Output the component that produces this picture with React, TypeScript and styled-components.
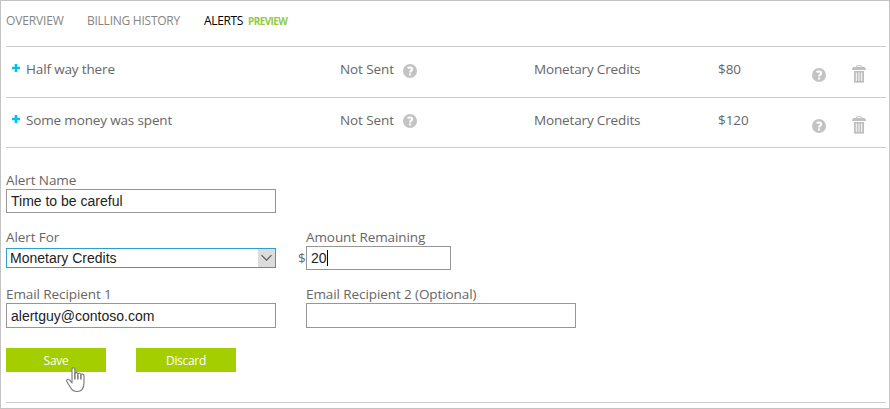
import React from "react";
import styled, { createGlobalStyle } from "styled-components";

const GlobalStyle = createGlobalStyle`
  * { box-sizing: border-box; }
  body { margin: 0; background: #fff; }
`;

const Panel = styled.main`
  position: relative;
  width: 890px;
  height: 409px;
  padding: 0 3px 0 5px;
  border: 1px solid #c3c3c3;
  background: #fff;
  color: #666;
  font-family: "Open Sans", "Noto Sans", sans-serif;
  font-size: 13.5px;
  line-height: 18px;
  overflow: hidden;
`;

const Label = styled.span<{ $spacing?: number }>`
  white-space: nowrap;
  letter-spacing: ${(p) => p.$spacing ?? -0.09}px;
`;

const Tabs = styled.nav`
  display: flex;
  height: 46px;
  padding-top: 11px;
  border-bottom: 1px solid #cdcdcd;
  font-size: 12px;
`;

const Tab = styled.div<{ $width: number; $active?: boolean }>`
  display: flex;
  width: ${(p) => p.$width}px;
  color: ${(p) => (p.$active ? "#000" : "#858585")};
`;

const Preview = styled.span`
  margin-left: 5px;
  color: #94ca3d;
  font-size: 10px;
  font-weight: 700;
  letter-spacing: -0.6px;
`;

const AlertRow = styled.div<{ $height: number }>`
  display: grid;
  grid-template-columns: 20px 314px 63px 131px 184px 94px 40px 34px;
  height: ${(p) => p.$height}px;
  border-bottom: 1px solid #cdcdcd;
`;

const Cell = styled.div<{ $top: number; $left?: number }>`
  padding-top: ${(p) => p.$top}px;
  padding-left: ${(p) => p.$left ?? 0}px;
  line-height: 18px;
`;

const Icon = styled.svg`
  display: block;
`;

const FormRow = styled.div<{ $height: number }>`
  display: grid;
  grid-template-columns: 270px 30px 270px;
  height: ${(p) => p.$height}px;
`;

const Group = styled.div<{ $gap?: number }>`
  display: flex;
  flex-direction: column;
  gap: ${(p) => p.$gap ?? 0}px;
`;

const Field = styled.div<{ $width?: number; $height?: number }>`
  display: flex;
  align-items: center;
  width: ${(p) => p.$width ?? 270}px;
  height: ${(p) => p.$height ?? 24}px;
  padding-left: 4px;
  border: 1px solid #969696;
  background: #fff;
  color: #222;
  font-family: "Liberation Sans", Arial, sans-serif;
  font-size: 14px;
`;

const Select = styled(Field)`
  height: 20px;
  padding-left: 3px;
  justify-content: space-between;
  border-color: #2a9fd0;
`;

const Arrow = styled.span`
  display: flex;
  align-items: center;
  justify-content: center;
  width: 17px;
  height: 18px;
  background: #dcdcdc;
`;

const Caret = styled.span`
  width: 1px;
  height: 16px;
  background: #000;
`;

const Currency = styled.span`
  padding: 21px 0 0 22px;
`;

const Actions = styled.div`
  display: flex;
  gap: 30px;
  height: 55px;
  border-bottom: 1px solid #cdcdcd;
`;

const Button = styled.button`
  width: 100px;
  height: 24px;
  padding: 1px 0 0;
  border: 0;
  background: #a5ce00;
  color: #fff;
  font-family: "Open Sans", "Noto Sans", sans-serif;
  font-size: 12px;
  letter-spacing: -0.3px;
  line-height: 20px;
`;

const Pointer = styled.svg`
  position: absolute;
  left: 64px;
  top: 365px;
`;

const Plus = () => (
  <Icon width="8" height="8" viewBox="0 0 8 8">
    <path d="M2.7 0h2.6v2.8H8v2.4H5.300V8H2.700V5.200H0V2.800h2.700z" fill="#00c3e6" />
  </Icon>
);

const Help = () => (
  <Icon width="14" height="14" viewBox="0 0 14 14">
    <circle cx="7" cy="7" r="7" fill="#c3c3c3" />
    <path d="M4.7 4.2c1.200-1.200 4.500-1.100 4.500 1C9.200 6.700 7.100 6.600 7.100 8.500" fill="none" stroke="#fff" strokeWidth="2" />
    <path d="M6.100 9.500h2v2h-2z" fill="#fff" />
  </Icon>
);

const Trash = () => (
  <Icon width="14" height="18" viewBox="0 0 14 18">
    <path d="M4.500 2.500V1.600Q4.500.7 5.400.7h3.200q.9 0 .9.9v.9" fill="none" stroke="#cfcfcf" strokeWidth="1.300" />
    <path d="M1.500 2h11L14 3.700V5H0V3.700z" fill="#c0c0c0" />
    <path d="M2 6h10v11.600H2z" fill="#bebebe" />
    <path d="M4.300 7.500v8.400M7 7.500v8.400M9.700 7.500v8.400" stroke="#fff" strokeWidth="1" />
  </Icon>
);

interface Alert {
  name: string;
  amount: string;
  height: number;
  helpTop: number;
}

const alerts: Alert[] = [
  { name: "Half way there", amount: "$80", height: 51, helpTop: 17 },
  { name: "Some money was spent", amount: "$120", height: 50, helpTop: 16 },
];

export default function App() {
  return (
    <>
      <GlobalStyle />
      <Panel>
        <Tabs>
          <Tab $width={81}><Label $spacing={-0.15}>OVERVIEW</Label></Tab>
          <Tab $width={117}><Label $spacing={-0.25}>BILLING HISTORY</Label></Tab>
          <Tab $width={100} $active>
            <Label $spacing={-0.35}>ALERTS</Label>
            <Preview>PREVIEW</Preview>
          </Tab>
        </Tabs>
        {alerts.map((a) => (
          <AlertRow key={a.name} $height={a.height}>
            <Cell $top={17} $left={6}><Plus /></Cell>
            <Cell $top={13}><Label $spacing={-0.15}>{a.name}</Label></Cell>
            <Cell $top={13}><Label>Not Sent</Label></Cell>
            <Cell $top={a.helpTop}><Help /></Cell>
            <Cell $top={13}><Label $spacing={-0.15}>Monetary Credits</Label></Cell>
            <Cell $top={13}><Label>{a.amount}</Label></Cell>
            <Cell $top={21}><Help /></Cell>
            <Cell $top={18}><Trash /></Cell>
          </AlertRow>
        ))}
        <FormRow $height={80}>
          <Cell $top={23}>
            <Label>Alert Name</Label>
            <Field>Time to be careful</Field>
          </Cell>
        </FormRow>
        <FormRow $height={57}>
          <Group $gap={2}>
            <Label>Alert For</Label>
            <Select>
              Monetary Credits
              <Arrow>
                <Icon width="13" height="8" viewBox="0 0 13 8">
                  <path d="M1.500 1.200l5 5 5-5" fill="none" stroke="#555" strokeWidth="1.100" />
                </Icon>
              </Arrow>
            </Select>
          </Group>
          <Currency>$</Currency>
          <Group>
            <Label>Amount Remaining</Label>
            <Field $width={145}>20<Caret /></Field>
          </Group>
        </FormRow>
        <FormRow $height={63}>
          <Group>
            <Label>Email Recipient 1</Label>
            <Field $height={25}>alertguy@contoso.com</Field>
          </Group>
          <span />
          <Group>
            <Label>Email Recipient 2 (Optional)</Label>
            <Field $height={25} />
          </Group>
        </FormRow>
        <Actions>
          <Button>Save</Button>
          <Button>Discard</Button>
        </Actions>
        <Pointer width="22" height="28" viewBox="0 0 22 28">
          <path
            d="M7 17V3.300C7 1.300 9.800 1.300 9.800 3.300v4.200c.4-1.300 3-1.200 3 .5.4-1.200 3-1 3 .7.5-1.100 3.200-.8 3.200 1v7.100c0 5.900-2.900 8.700-7.200 8.700-3.100 0-5-1.500-6.500-4.300L1.700 15.200c-.6-1.700 1.400-2.700 2.800-1.300z"
            fill="#fff" stroke="#777" strokeWidth="1.100" strokeLinejoin="round"
          />
          <path d="M9.900 7.500v6M12.900 8.500v5M15.900 9v4.500" stroke="#555" strokeWidth="1.200" />
        </Pointer>
      </Panel>
    </>
  );
}
